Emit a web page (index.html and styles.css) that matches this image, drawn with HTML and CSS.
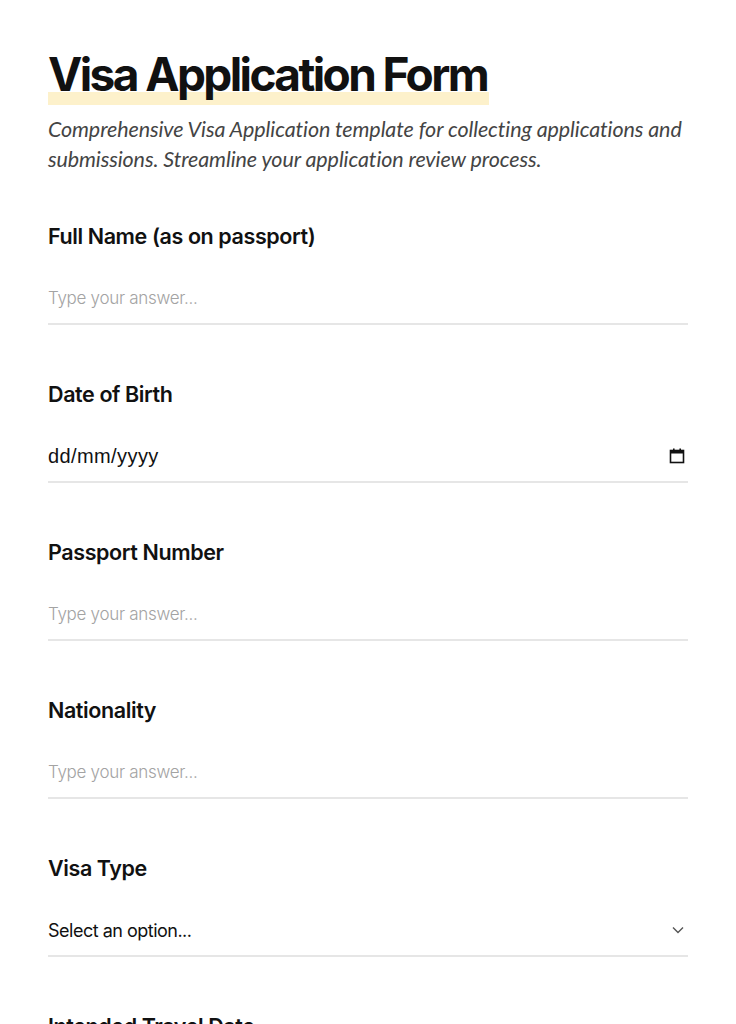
FILE: index.html
```html
<!DOCTYPE html>
<html lang="en">
<head>
<meta charset="utf-8">
<title>Visa Application Form</title>
<link rel="stylesheet" href="styles.css">
</head>
<body>
<main class="page">
  <header class="intro">
    <h1 class="title"><span class="title-mark">Visa Application Form</span></h1>
    <p class="subtitle">Comprehensive Visa Application template for collecting applications and submissions. Streamline your application review process.</p>
  </header>
  <form class="form">
    <div class="field">
      <label class="label" for="f1">Full Name (as on passport)</label>
      <input class="input" id="f1" type="text" placeholder="Type your answer...">
    </div>
    <div class="field">
      <label class="label">Date of Birth</label>
      <div class="input control">
        <span class="date-text">dd/mm/yyyy</span>
        <svg class="cal" width="18" height="18" viewBox="0 0 18 18" aria-hidden="true">
          <rect x="2.5" y="3.5" width="13" height="12" fill="none" stroke="#111" stroke-width="1.6"/>
          <rect x="2.5" y="3.5" width="13" height="3" fill="#111"/>
          <rect x="5" y="1.5" width="1.6" height="3" fill="#111"/>
          <rect x="11.4" y="1.5" width="1.6" height="3" fill="#111"/>
        </svg>
      </div>
    </div>
    <div class="field">
      <label class="label" for="f3">Passport Number</label>
      <input class="input" id="f3" type="text" placeholder="Type your answer...">
    </div>
    <div class="field">
      <label class="label" for="f4">Nationality</label>
      <input class="input" id="f4" type="text" placeholder="Type your answer...">
    </div>
    <div class="field">
      <label class="label">Visa Type</label>
      <div class="input control">
        <span class="select-text">Select an option...</span>
        <svg class="chev" width="14" height="14" viewBox="0 0 14 14" aria-hidden="true">
          <path d="M2 4.5 L7 9.5 L12 4.5" fill="none" stroke="#555" stroke-width="1.4"/>
        </svg>
      </div>
    </div>
    <div class="field">
      <label class="label">Intended Travel Date</label>
      <div class="input control">
        <span class="date-text">dd/mm/yyyy</span>
      </div>
    </div>
  </form>
</main>
</body>
</html>
```
FILE: styles.css
```css
* { box-sizing: border-box; }
html, body { margin: 0; padding: 0; background: #fff; }
body {
  font-family: Inter, "Noto Sans", sans-serif;
  color: #111;
}
.page {
  padding: 44px 48px 0 48px;
}
.intro { margin: 0; }
.title {
  margin: 0;
  font-size: 46px;
  font-weight: 700;
  letter-spacing: -2.6px;
  line-height: 61px;
}
.title-mark {
  display: inline-block;
  padding-right: 2px;
  background: linear-gradient(to top, #fdf1cb 13px, transparent 13px);
}
.subtitle {
  margin: 9px 0 0 0;
  font-family: Lato, sans-serif;
  font-style: italic;
  font-size: 21.5px;
  line-height: 30px;
  color: #444;
  letter-spacing: -0.1px;
}
.form {
  margin-top: 47px;
  display: flex;
  flex-direction: column;
  gap: 54px;
}
.field {
  display: flex;
  flex-direction: column;
  gap: 22px;
}
.label {
  font-size: 21.5px;
  font-weight: 600;
  line-height: 30px;
  letter-spacing: -0.4px;
  color: #111;
}
.input {
  height: 52px;
  width: 100%;
  border: none;
  border-bottom: 2px solid #e6e6e6;
  padding: 0;
  margin: 0;
  font-family: Inter, sans-serif;
  font-size: 17px;
  color: #111;
  background: transparent;
  outline: none;
}
.input::placeholder {
  color: #a3a3a3;
  font-weight: 300;
  letter-spacing: -0.3px;
}
.control {
  display: flex;
  align-items: center;
  justify-content: space-between;
}
.date-text {
  font-family: "Liberation Sans", Arial, sans-serif;
  font-size: 20px;
  letter-spacing: 0.4px;
  color: #111;
}
.select-text {
  font-size: 18px;
  letter-spacing: -0.5px;
  color: #111;
}
.cal { margin-right: 2px; }
.chev { margin-right: 3px; }
```
